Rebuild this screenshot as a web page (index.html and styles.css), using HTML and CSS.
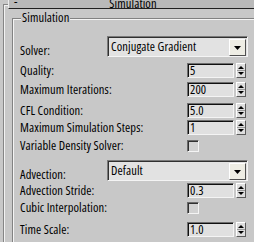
FILE: index.html
```html
<!DOCTYPE html>
<html>
<head>
<meta charset="utf-8">
<link rel="stylesheet" href="styles.css">
</head>
<body>
<div class="rollout">
  <div class="rtitle"><span class="minus">-</span><span class="rtext">Simulation</span><span></span></div>
  <div class="group">
    <span class="legend">Simulation</span>
    <div class="row combo-row r-solver">
      <span class="label">Solver:</span>
      <div class="combo"><span class="combo-text">Conjugate Gradient</span><span class="drop"><svg width="7" height="4" viewBox="0 0 7 4"><path d="M0 0H7L3.5 4Z" fill="#000"/></svg></span></div>
    </div>
    <div class="row spin-row r-quality">
      <span class="label">Quality:</span>
      <div class="spinner"><span class="field">5</span><span class="arrows"><svg width="8" height="13" viewBox="0 0 8 13"><path d="M1 5H7L4 2Z" fill="#000"/><path d="M0 6.5H8" stroke="#9a9a9a" stroke-width="1"/><path d="M1 8H7L4 11Z" fill="#000"/></svg></span></div>
    </div>
    <div class="row spin-row r-iter">
      <span class="label">Maximum Iterations:</span>
      <div class="spinner"><span class="field">200</span><span class="arrows"><svg width="8" height="13" viewBox="0 0 8 13"><path d="M1 5H7L4 2Z" fill="#000"/><path d="M0 6.5H8" stroke="#9a9a9a" stroke-width="1"/><path d="M1 8H7L4 11Z" fill="#000"/></svg></span></div>
    </div>
    <div class="row spin-row r-cfl">
      <span class="label">CFL Condition:</span>
      <div class="spinner"><span class="field">5.0</span><span class="arrows"><svg width="8" height="13" viewBox="0 0 8 13"><path d="M1 5H7L4 2Z" fill="#000"/><path d="M0 6.5H8" stroke="#9a9a9a" stroke-width="1"/><path d="M1 8H7L4 11Z" fill="#000"/></svg></span></div>
    </div>
    <div class="row spin-row r-steps">
      <span class="label">Maximum Simulation Steps:</span>
      <div class="spinner"><span class="field">1</span><span class="arrows"><svg width="8" height="13" viewBox="0 0 8 13"><path d="M1 5H7L4 2Z" fill="#000"/><path d="M0 6.5H8" stroke="#9a9a9a" stroke-width="1"/><path d="M1 8H7L4 11Z" fill="#000"/></svg></span></div>
    </div>
    <div class="row spin-row r-vds">
      <span class="label">Variable Density Solver:</span>
      <span class="check"></span>
    </div>
    <div class="row combo-row r-adv">
      <span class="label">Advection:</span>
      <div class="combo"><span class="combo-text">Default</span><span class="drop"><svg width="7" height="4" viewBox="0 0 7 4"><path d="M0 0H7L3.5 4Z" fill="#000"/></svg></span></div>
    </div>
    <div class="row spin-row r-stride">
      <span class="label">Advection Stride:</span>
      <div class="spinner"><span class="field">0.3</span><span class="arrows"><svg width="8" height="13" viewBox="0 0 8 13"><path d="M1 5H7L4 2Z" fill="#000"/><path d="M0 6.5H8" stroke="#9a9a9a" stroke-width="1"/><path d="M1 8H7L4 11Z" fill="#000"/></svg></span></div>
    </div>
    <div class="row spin-row r-cubic">
      <span class="label">Cubic Interpolation:</span>
      <span class="check"></span>
    </div>
    <div class="row spin-row r-time">
      <span class="label">Time Scale:</span>
      <div class="spinner"><span class="field">1.0</span><span class="arrows"><svg width="8" height="13" viewBox="0 0 8 13"><path d="M1 5H7L4 2Z" fill="#000"/><path d="M0 6.5H8" stroke="#9a9a9a" stroke-width="1"/><path d="M1 8H7L4 11Z" fill="#000"/></svg></span></div>
    </div>
  </div>
</div>
</body>
</html>
```

FILE: styles.css
```css
html, body {
  margin: 0;
  padding: 0;
}
body {
  width: 254px;
  height: 242px;
  overflow: hidden;
  background: #c8c8c8;
  font-family: "Open Sans", "Liberation Sans", Arial, sans-serif;
  font-stretch: 75%;
  font-size: 12.5px;
  letter-spacing: 0.1px;
  line-height: 14px;
  color: #000;
}
.rollout {
  margin: 4px 0 0 3px;
  width: 290px;
  height: 260px;
  border-top: 1px solid #858585;
  border-left: 1px solid #858585;
  box-shadow: inset 1px 1px 0 #f2f2f2;
}
.rtitle {
  margin: -16px 0 0 4px;
  width: 248px;
  height: 18px;
  border: 1px solid;
  border-color: #ececec #202020 #202020 #ececec;
  background: #b9b9b9;
  display: grid;
  grid-template-columns: 1fr auto 1fr;
  align-items: end;
}
.minus {
  padding-left: 5px;
  line-height: 12px;
}
.rtext {
  line-height: 14px;
  margin-bottom: -3px;
}
.group {
  position: relative;
  margin: 9px 0 0 8px;
  height: 260px;
  border-top: 1px solid #828282;
  border-left: 1px solid #828282;
  box-shadow: inset 1px 1px 0 #f4f4f4;
  padding: 0 0 0 7px;
  display: flex;
  flex-direction: column;
}
.legend {
  position: absolute;
  top: -8px;
  left: 8px;
  padding: 0 1px;
  background: #c8c8c8;
  line-height: 14px;
}
.row {
  display: flex;
}
.spin-row {
  height: 15px;
  align-items: center;
}
.spin-row .label {
  flex: 0 0 167px;
  padding-top: 1px;
}
.combo-row {
  height: 21px;
  align-items: flex-start;
}
.combo-row .label {
  flex: 0 0 87px;
  padding-top: 8px;
}
.r-solver { margin-top: 17px; }
.r-quality { margin-top: 6px; }
.r-iter { margin-top: 4px; }
.r-cfl { margin-top: 6px; }
.r-steps { margin-top: 2px; }
.r-vds { margin-top: 3px; }
.r-adv { margin-top: 7px; }
.r-stride { margin-top: 2px; }
.r-cubic { margin-top: 2px; }
.r-time { margin-top: 7px; }

.combo {
  box-sizing: border-box;
  width: 141px;
  height: 21px;
  border: 1px solid;
  border-color: #7a7a7a #f4f4f4 #f4f4f4 #7a7a7a;
  box-shadow: inset 1px 1px 0 #303030;
  background: #e2e2e2;
  display: flex;
  align-items: flex-start;
  padding: 1px 1px 0 2px;
}
.combo-text {
  flex: 1;
  padding-top: 2px;
  padding-left: 1px;
}
.drop {
  box-sizing: border-box;
  width: 17px;
  height: 17px;
  margin-top: 1px;
  border: 1px solid;
  border-color: #ffffff #505050 #505050 #ffffff;
  background: #eeede4;
  display: flex;
  align-items: center;
  justify-content: center;
}
.spinner {
  display: flex;
  align-items: center;
  gap: 2px;
}
.field {
  box-sizing: border-box;
  width: 47px;
  height: 15px;
  border: 1px solid;
  border-color: #6e6e6e #f4f4f4 #f4f4f4 #6e6e6e;
  box-shadow: inset 1px 1px 0 #101010;
  background: #e0e0e0;
  padding-left: 2px;
  line-height: 13px;
}
.arrows {
  box-sizing: border-box;
  width: 10px;
  height: 15px;
  border: 1px solid;
  border-color: #ffffff #5a5a5a #5a5a5a #ffffff;
  background: #dedede;
  display: flex;
}
.check {
  box-sizing: border-box;
  width: 12px;
  height: 12px;
  border: 1px solid;
  border-color: #6a6a6a #f4f4f4 #f4f4f4 #6a6a6a;
  box-shadow: inset 1px 1px 0 #303030;
  background: #d2d2d2;
}
```
